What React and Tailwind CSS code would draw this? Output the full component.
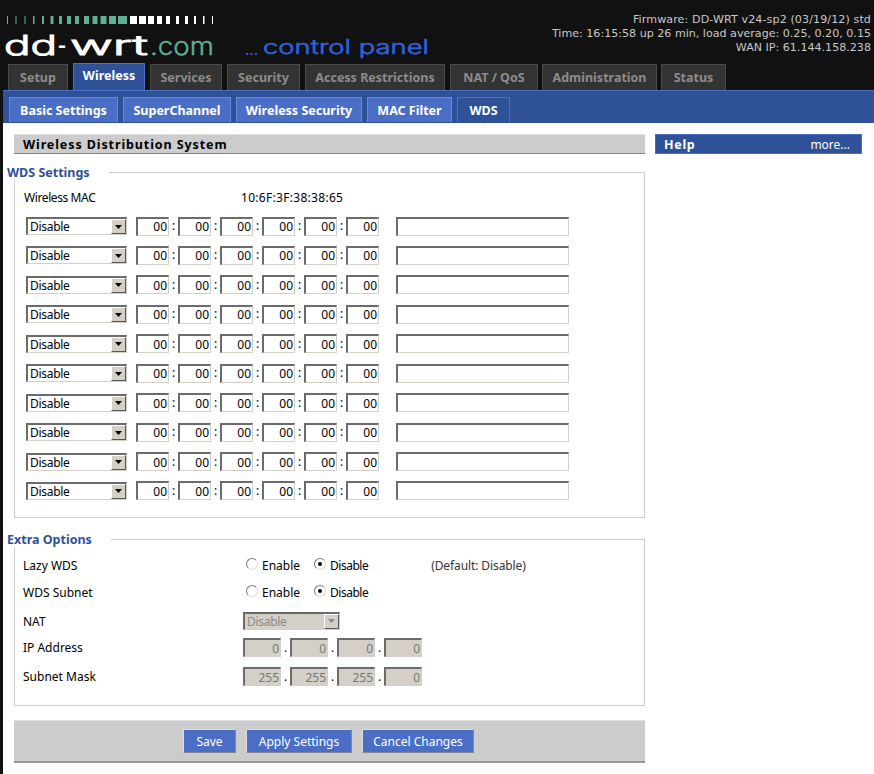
const FONT = { fontFamily: '"Noto Sans", "DejaVu Sans", sans-serif' };

const mainTabs = [
  ["Setup", "w-[60px]", false, "ml-0"],
  ["Wireless", "w-[72px]", true, "ml-[5px]"],
  ["Services", "w-[72px]", false, "ml-[5px]"],
  ["Security", "w-[73px]", false, "ml-[5px]"],
  ["Access Restrictions", "w-[140px]", false, "ml-[5px]"],
  ["NAT / QoS", "w-[88px]", false, "ml-[5px]"],
  ["Administration", "w-[115px]", false, "ml-[4px]"],
  ["Status", "w-[65px]", false, "ml-[4px]"],
];
const subTabs = [
  ["Basic Settings", "w-[109px]", false],
  ["SuperChannel", "w-[108px]", false],
  ["Wireless Security", "w-[126px]", false],
  ["MAC Filter", "w-[85px]", false],
  ["WDS", "w-[53px]", true],
];

const bars = [
  [7, 1], [15.5, 1], [24.5, 1], [33, 1.5], [42, 2], [50.5, 3], [59, 3], [67, 4], [75, 4], [84, 5], [92.5, 5], [100.5, 6], [109, 7], [118, 9],
];
const whiteBars = [
  [130, 7], [139, 7], [148, 6], [157, 5], [166, 4], [176, 3], [185, 3], [194, 2], [203, 1.5], [212, 1],
];

function Logo() {
  const wordFont = "Inter, sans-serif";
  return (
    <svg width="440" height="63" viewBox="0 0 440 63" className="block shrink-0">
      {bars.map(([x, w]) => (
        <rect key={x} x={x} y="16" width={w} height="8" fill="#5fae96" />
      ))}
      {whiteBars.map(([x, w]) => (
        <rect key={x} x={x} y="16" width={w} height="8" fill="#ffffff" />
      ))}
      <text x="4" y="55" fontFamily={wordFont} fontWeight="300" fontSize="27" fill="#fff" stroke="#fff" strokeWidth="0.9" textLength="53" lengthAdjust="spacingAndGlyphs">dd</text>
      <text x="58" y="55" fontFamily={wordFont} fontWeight="300" fontSize="27" fill="#fff" stroke="#fff" strokeWidth="0.9" textLength="8" lengthAdjust="spacingAndGlyphs">-</text>
      <text x="70" y="55" fontFamily={wordFont} fontWeight="300" fontSize="27" fill="#fff" stroke="#fff" strokeWidth="0.9" textLength="78" lengthAdjust="spacingAndGlyphs">wrt</text>
      <text x="150" y="55" fontFamily={wordFont} fontWeight="300" fontSize="25" fill="#5fae96" stroke="#5fae96" strokeWidth="0.4" textLength="64" lengthAdjust="spacingAndGlyphs">.com</text>
      <text x="245" y="55" fontFamily={wordFont} fontWeight="300" fontSize="20" fill="#2d62dc" stroke="#2d62dc" strokeWidth="0.4" textLength="13" lengthAdjust="spacingAndGlyphs">...</text>
      <text x="263" y="54" fontFamily={wordFont} fontWeight="300" fontSize="20" fill="#2d62dc" stroke="#2d62dc" strokeWidth="0.6" textLength="166" lengthAdjust="spacingAndGlyphs">control panel</text>
    </svg>
  );
}

function Select({ disabled = false, className = "" }) {
  return (
    <div
      className={
        "flex h-[18px] items-stretch border-t-2 border-r border-b border-l-2 border-t-[#6b6b6b] border-r-[#d4d0c8] border-b-[#d4d0c8] border-l-[#6b6b6b] " +
        (disabled ? "bg-[#d4d0c8] text-[#8a8a8a] " : "bg-white text-black ") +
        className
      }
    >
      <span className="flex-1 pl-[2px] text-[12px] leading-[15px] tracking-[-0.3px]">Disable</span>
      <span className="flex w-[15px] items-center justify-center border border-t-white border-r-[#555] border-b-[#555] border-l-white bg-[#d4d0c8]">
        <svg width="7" height="4" viewBox="0 0 7 4">
          <path d="M0 0H7L3.5 4Z" fill={disabled ? "#8a8a8a" : "#000"} />
        </svg>
      </span>
    </div>
  );
}

function Field({ value, className = "", disabled = false }) {
  return (
    <input
      readOnly
      value={value}
      className={
        "h-[19px] border-t-2 border-r border-b border-l-2 border-t-[#6b6b6b] border-r-[#d4d0c8] border-b-[#d4d0c8] border-l-[#6b6b6b] pr-[1px] text-right text-[12px] outline-none " +
        (disabled ? "bg-[#d4d0c8] text-[#777] " : "bg-white text-black ") +
        className
      }
      style={FONT}
    />
  );
}

function WdsRow() {
  return (
    <div className="flex h-[29.44px] items-center pl-[11px]">
      <Select className="w-[101px]" />
      <div className="ml-[9px] flex items-center">
        {[0, 1, 2, 3, 4, 5].map((i) => (
          <div key={i} className="flex items-center">
            <Field value="00" className="w-[33px]" />
            {i < 5 && <span className="w-[9px] text-center text-[12px] leading-none">:</span>}
          </div>
        ))}
      </div>
      <input readOnly className="ml-[17px] h-[19px] w-[173px] border-t-2 border-r border-b border-l-2 border-t-[#6b6b6b] border-r-[#d4d0c8] border-b-[#d4d0c8] border-l-[#6b6b6b] bg-white outline-none" />
    </div>
  );
}

function Radio({ on, label }) {
  return (
    <span className="flex items-center">
      <span className="mb-[1px] flex h-[12px] w-[12px] items-center justify-center rounded-full border border-t-[#777] border-r-[#ddd] border-b-[#ddd] border-l-[#777] bg-white">
        {on && <span className="h-[4px] w-[4px] rounded-full bg-black" />}
      </span>
      <span className={"mt-[3px] ml-[4px] text-[12px] leading-none " + (on ? "tracking-[-0.5px]" : "")}>{label}</span>
    </span>
  );
}

function Legend({ children, shift = "pt-[1px]" }) {
  return (
    <legend className={"-ml-[8px] pr-[19px] text-[12.5px] leading-[13px] font-bold text-[#2f5198] " + shift}>{children}</legend>
  );
}

function Label({ children, drop = "pt-[2px]" }) {
  return <span className={"w-[220px] shrink-0 text-[12px] leading-none " + drop}>{children}</span>;
}

function Octets({ values }) {
  return (
    <div className="flex items-center">
      {values.map((v, i) => (
        <div key={i} className="flex items-center">
          <Field value={v} disabled className="w-[38px]" />
          {i < 3 && <span className="w-[9px] text-center text-[12px] leading-none">.</span>}
        </div>
      ))}
    </div>
  );
}

export default function App() {
  return (
    <div className="h-[774px] w-[874px] overflow-hidden bg-[#111111] text-black" style={FONT}>
      <div className="flex h-[63px] justify-between">
        <Logo />
        <div className="pt-[13px] pr-[3px] text-right font-['DejaVu_Sans'] text-[11.1px] leading-[14px] text-[#c8c8c8]">
          <div className="tracking-[0.1px]">Firmware: DD-WRT v24-sp2 (03/19/12) std</div>
          <div>Time: 16:15:58 up 26 min, load average: 0.25, 0.20, 0.15</div>
          <div>WAN IP: 61.144.158.238</div>
        </div>
      </div>

      <div className="flex h-[27px] items-end pl-[8px]">
        {mainTabs.map(([name, w, active, ml]) => (
          <div
            key={name}
            className={
              w + " " + ml + " flex items-center justify-center border border-b-0 text-[12.5px] font-bold " +
              (active
                ? "h-[27px] border-[#4a6ec5] bg-[#2f5198] pb-[1px] text-white"
                : "h-[26px] border-[#4a4a4a] bg-[#333333] pt-[1px] text-[#8c8c8c]")
            }
          >
            {name}
          </div>
        ))}
      </div>

      <div className="ml-[3px] flex h-[33px] items-end gap-[5px] border-t border-[#4a6ec5] bg-[#2f5198] pb-[1px] pl-[6px]">
        {subTabs.map(([name, w, active]) => (
          <div
            key={name}
            className={
              w + " flex h-[25px] items-center justify-center border border-b-0 pt-[2px] text-[12.5px] font-bold text-white " +
              (active ? "border-[#4a6ec5] bg-[#2f5198]" : "border-[#6a88d4] bg-[#4a6ec5]")
            }
          >
            {name}
          </div>
        ))}
      </div>

      <div className="ml-[3px] flex h-[651px] bg-white pt-[11px] pl-[11px]">
        <div className="w-[631px] shrink-0">
          <div className="flex h-[20px] items-center border-t border-b border-t-[#e0e0e0] border-b-[#888] bg-[#cccccc] pt-[2px] pl-[9px] text-[12.5px] font-bold tracking-[0.9px]">
            Wireless Distribution System
          </div>

          <fieldset className="mt-[11px] border border-[#cccccc] pb-[11.3px]">
            <Legend>WDS Settings</Legend>
            <div className="flex h-[32.3px] items-center pt-[6px] pl-[9px] text-[12px]">
              <span className="w-[217px] tracking-[-0.4px]">Wireless MAC</span>
              <span className="tracking-[0.3px]">10:6F:3F:38:38:65</span>
            </div>
            {[0, 1, 2, 3, 4, 5, 6, 7, 8, 9].map((i) => (
              <WdsRow key={i} />
            ))}
          </fieldset>

          <fieldset className="mt-[15px] border border-[#cccccc] pb-[18px]">
            <Legend shift="pb-[1px]">Extra Options</Legend>
            <div className="flex flex-col pl-[8px]">
              <div className="mt-[8px] flex h-[20px] items-center">
                <Label>Lazy WDS</Label>
                <span className="ml-[3px] flex gap-[14px]">
                  <Radio label="Enable" />
                  <Radio on label="Disable" />
                </span>
                <span className="mt-[2px] ml-[63px] text-[12px] leading-none tracking-[-0.1px] text-[#333]">(Default: Disable)</span>
              </div>
              <div className="mt-[7px] flex h-[20px] items-center">
                <Label>WDS Subnet</Label>
                <span className="ml-[3px] flex gap-[14px]">
                  <Radio label="Enable" />
                  <Radio on label="Disable" />
                </span>
              </div>
              <div className="mt-[9px] flex h-[20px] items-center">
                <Label>NAT</Label>
                <Select disabled className="w-[97px]" />
              </div>
              <div className="mt-[7px] flex h-[20px] items-center">
                <Label drop="pt-[1px]">IP Address</Label>
                <Octets values={["0", "0", "0", "0"]} />
              </div>
              <div className="mt-[9px] flex h-[20px] items-center">
                <Label drop="pt-[1px]">Subnet Mask</Label>
                <Octets values={["255", "255", "255", "0"]} />
              </div>
            </div>
          </fieldset>

          <div className="mt-[14px] flex h-[43px] items-center justify-center gap-[10px] border-t border-b-2 border-t-[#e0e0e0] border-b-[#999] bg-[#cccccc] pt-[1px] pr-[2px]">
            {[["Save", "w-[53px]"], ["Apply Settings", "w-[106px]"], ["Cancel Changes", "w-[112px]"]].map(([t, w]) => (
              <div
                key={t}
                className={w + " flex h-[24px] items-center justify-center border border-t-[#ddd] border-r-[#888] border-b-[#888] border-l-[#ddd] bg-[#4a6ec5] pt-[2px] text-[12px] text-white"}
              >
                {t}
              </div>
            ))}
          </div>
        </div>

        <div className="ml-[10px] flex h-[20px] w-[207px] items-center justify-between border border-[#4a6ec5] bg-[#2f5198] pt-[1px] pr-[11px] pl-[8px] text-white">
          <span className="pt-[1px] text-[12.5px] font-bold tracking-[0.7px]">Help</span>
          <span className="text-[12px]">more...</span>
        </div>
      </div>
    </div>
  );
}
